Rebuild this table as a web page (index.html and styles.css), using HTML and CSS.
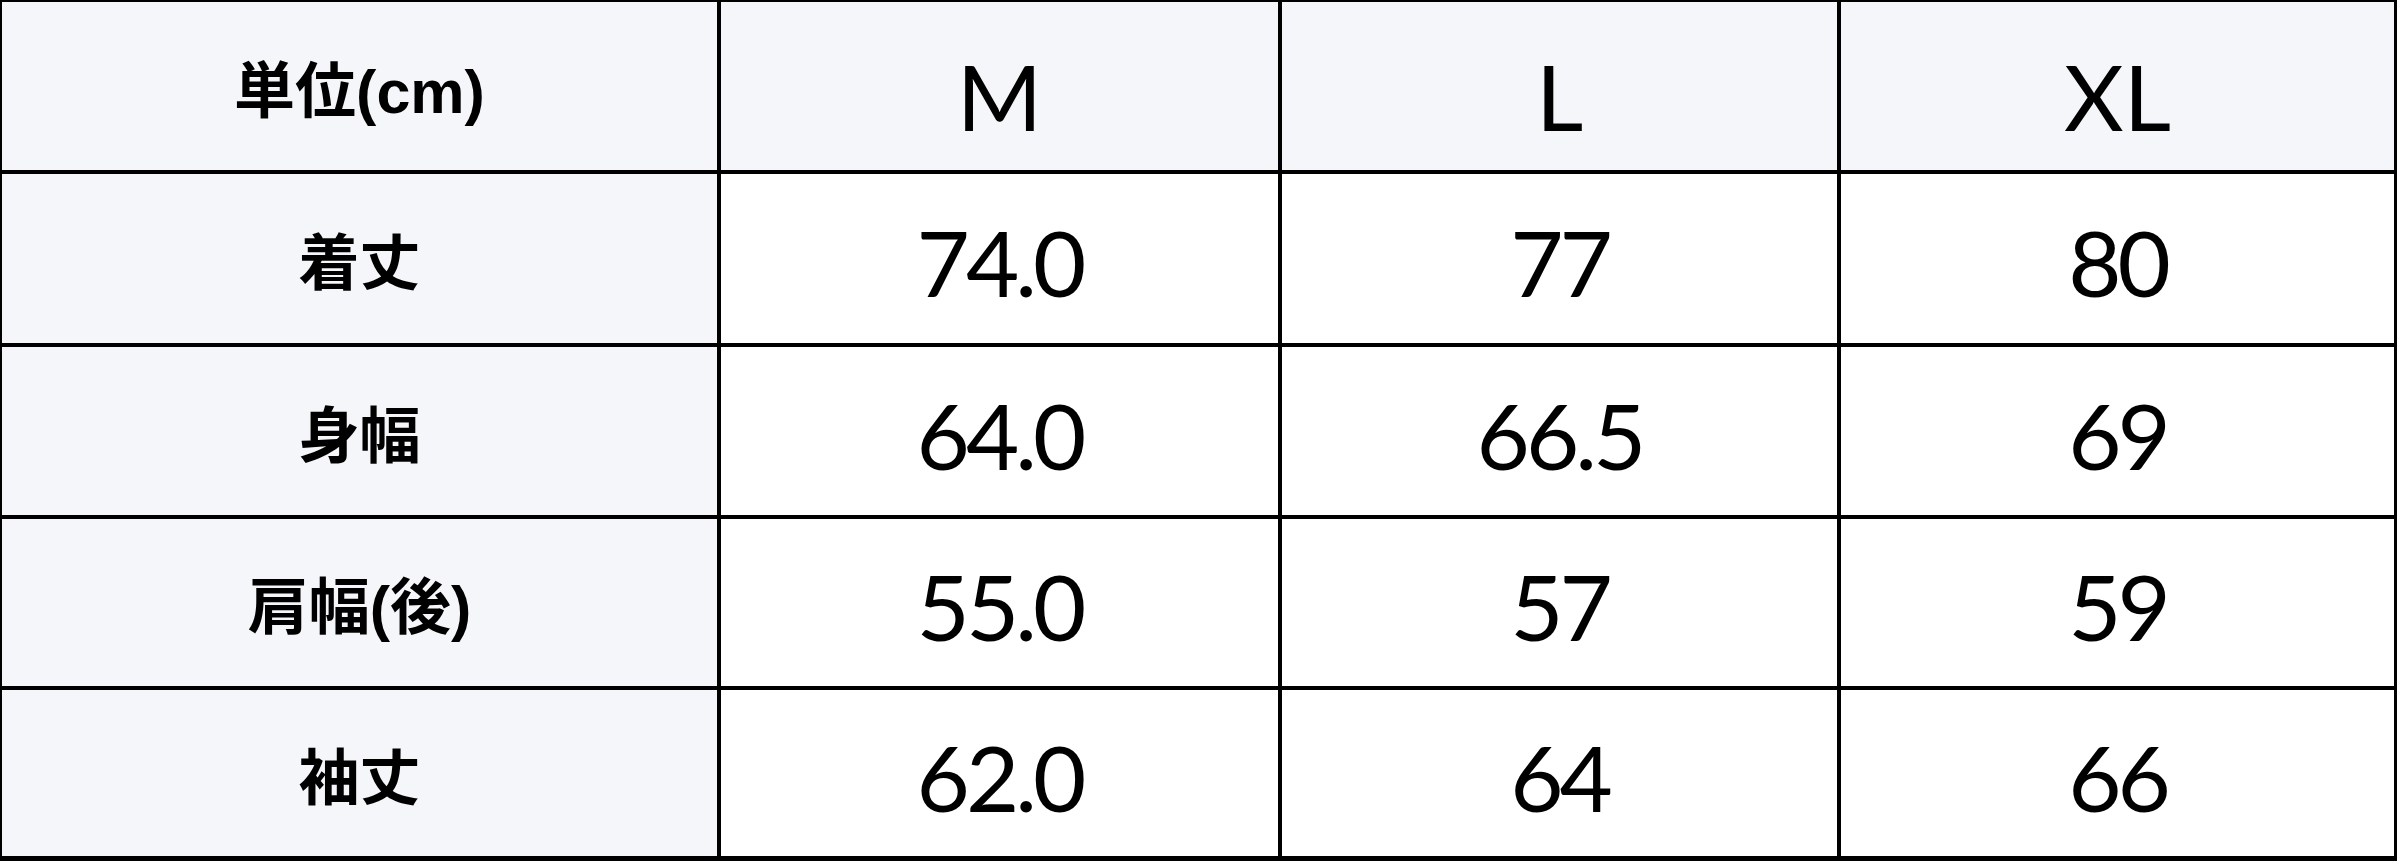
FILE: index.html
```html
<!DOCTYPE html>
<html lang="ja">
<head>
<meta charset="utf-8">
<title>サイズ表</title>
<link rel="stylesheet" href="styles.css">
</head>
<body>
<div class="sheet">
  <div class="cell label head">単位(cm)</div>
  <div class="cell size head">M</div>
  <div class="cell size head">L</div>
  <div class="cell size head">XL</div>

  <div class="cell label">着丈</div>
  <div class="cell value">74.0</div>
  <div class="cell value">77</div>
  <div class="cell value">80</div>

  <div class="cell label">身幅</div>
  <div class="cell value">64.0</div>
  <div class="cell value">66.5</div>
  <div class="cell value">69</div>

  <div class="cell label">肩幅(後)</div>
  <div class="cell value">55.0</div>
  <div class="cell value">57</div>
  <div class="cell value">59</div>

  <div class="cell label">袖丈</div>
  <div class="cell value">62.0</div>
  <div class="cell value">64</div>
  <div class="cell value">66</div>
</div>
</body>
</html>
```

FILE: styles.css
```css
html, body {
  margin: 0;
  padding: 0;
  background: #ffffff;
}

.sheet {
  box-sizing: border-box;
  width: 2397px;
  height: 861px;
  display: grid;
  grid-template-columns: 715px 557px 555px 1fr;
  grid-template-rows: 168px 169px 168px 167px 1fr;
  gap: 4px;
  padding: 2px 3px 5px 2px;
  background: #000000;
}

.cell {
  display: flex;
  align-items: center;
  justify-content: center;
  background: #ffffff;
  color: #000000;
}

.label {
  background: #f5f6fa;
  font-family: "Liberation Sans", "Noto Sans CJK JP", sans-serif;
  font-weight: bold;
  font-size: 61px;
}

.head {
  background: #f5f6fa;
}

.size,
.value {
  font-family: Lato, "Open Sans", sans-serif;
  font-weight: 400;
  font-size: 92px;
}

.size {
  padding-top: 18px;
}

.value {
  padding-top: 6px;
  letter-spacing: -4px;
}
```
